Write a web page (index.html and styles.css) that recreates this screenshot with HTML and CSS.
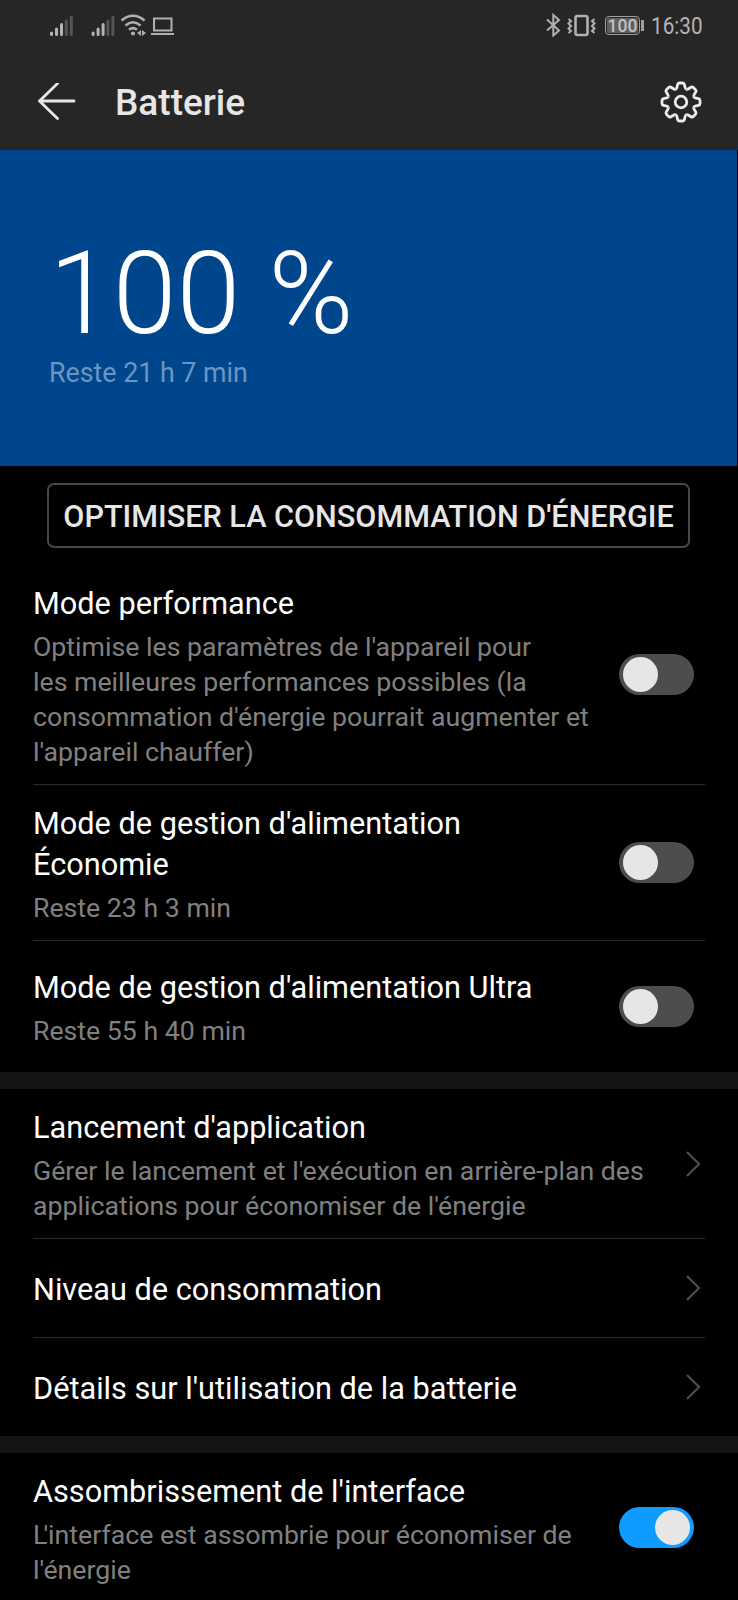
FILE: index.html
```html
<!DOCTYPE html>
<html lang="fr">
<head>
  <meta charset="UTF-8">
  <title>Batterie</title>
  <link rel="stylesheet" href="styles.css">
</head>
<body>
  <header>
    <div class="status-bar">
      <svg class="status-left" width="126" height="24" viewBox="0 0 126 24">
        <!-- signal bars -->
        <g id="signal">
          <path class="bar" d="M3.5 21.500V20M8.500 21.500V16M13.500 21.500V11.500"/>
          <path class="bar off" d="M18.300 21.500V8M23.300 21.500V4"/>
        </g>
        <use href="#signal" x="41.600"/>
        <!-- wifi -->
        <path class="line" d="M73.500 7.500Q85 -2 96.500 7.500M77.500 12.500Q85 6 92.500 12.500M81 16.800Q85 13.500 89 16.800"/>
        <circle class="fill" cx="85" cy="20.500" r="2.100"/>
        <path class="fill" d="M93 17v6l-4-3zM94 17v6l4-3z"/>
        <!-- laptop -->
        <path class="line thin" d="M106 5.500H123.500V17.500H106zM103 21H126"/>
      </svg>
      <div class="status-right">
        <svg width="50" height="24" viewBox="0 0 50 24">
          <!-- bluetooth -->
          <path class="line thin" d="M1 6.500L13 17.500L7.300 22.500V2L13 7L1 17.500"/>
          <!-- vibrate -->
          <rect class="line" x="29.500" y="3" width="12" height="19" rx="2"/>
          <path class="line thin" d="M22.500 6l2.500 2-2.500 2.500 2.500 2.500-2.500 2.500 2.500 2.500-2.500 2M48.500 6l-2.500 2 2.500 2.500-2.500 2.500 2.500 2.500-2.500 2.500 2.500 2"/>
        </svg>
        <div class="battery"><span>100</span></div>
        <span class="clock">16:30</span>
      </div>
    </div>

    <div class="title-bar">
      <svg width="38" height="38" viewBox="0 0 38 38">
        <path class="arrow" d="M36 18H1.500M19.500 .5L1.500 18L19.500 35.500"/>
      </svg>
      <h1>Batterie</h1>
      <svg width="42" height="42" viewBox="-21 -21 42 42">
        <g class="gear">
          <path id="tooth" d="M-5.280 -12.750Q-4.300 -13.160 -3.900 -15.200L-3.400 -17.500Q-3.100 -19 -1.600 -19H1.600Q3.100 -19 3.400 -17.500L3.900 -15.200Q4.300 -13.160 5.280 -12.750"/>
          <use href="#tooth" transform="rotate(45)"/>
          <use href="#tooth" transform="rotate(90)"/>
          <use href="#tooth" transform="rotate(135)"/>
          <use href="#tooth" transform="rotate(180)"/>
          <use href="#tooth" transform="rotate(225)"/>
          <use href="#tooth" transform="rotate(270)"/>
          <use href="#tooth" transform="rotate(315)"/>
          <circle r="5.800"/>
        </g>
      </svg>
    </div>
  </header>

  <section class="level">
    <div class="percent">100 %</div>
    <div class="remaining">Reste 21 h 7 min</div>
  </section>

  <button class="optimize-btn">OPTIMISER LA CONSOMMATION D'ÉNERGIE</button>

  <section class="group">
    <div class="row">
      <div class="text">
        <h2>Mode performance</h2>
        <p>Optimise les paramètres de l'appareil pour<br>les meilleures performances possibles (la<br>consommation d'énergie pourrait augmenter et<br>l'appareil chauffer)</p>
      </div>
      <div class="switch"></div>
    </div>
    <div class="row">
      <div class="text">
        <h2>Mode de gestion d'alimentation<br>Économie</h2>
        <p>Reste 23 h 3 min</p>
      </div>
      <div class="switch"></div>
    </div>
    <div class="row tall">
      <div class="text">
        <h2>Mode de gestion d'alimentation Ultra</h2>
        <p>Reste 55 h 40 min</p>
      </div>
      <div class="switch"></div>
    </div>
  </section>

  <section class="group">
    <div class="row">
      <div class="text">
        <h2>Lancement d'application</h2>
        <p>Gérer le lancement et l'exécution en arrière-plan des<br>applications pour économiser de l'énergie</p>
      </div>
      <svg class="chevron" width="16" height="28" viewBox="0 0 16 28"><path d="M2 2L14 14L2 26"/></svg>
    </div>
    <div class="row single">
      <div class="text">
        <h2>Niveau de consommation</h2>
      </div>
      <svg class="chevron" width="16" height="28" viewBox="0 0 16 28"><path d="M2 2L14 14L2 26"/></svg>
    </div>
    <div class="row single">
      <div class="text">
        <h2>Détails sur l'utilisation de la batterie</h2>
      </div>
      <svg class="chevron" width="16" height="28" viewBox="0 0 16 28"><path d="M2 2L14 14L2 26"/></svg>
    </div>
  </section>

  <section class="group">
    <div class="row">
      <div class="text">
        <h2>Assombrissement de l'interface</h2>
        <p><span class="kern">L</span>'interface est assombrie pour économiser de<br>l'énergie</p>
      </div>
      <div class="switch on"></div>
    </div>
  </section>
</body>
</html>
```
FILE: styles.css
```css
* {
  box-sizing: border-box;
}
body {
  margin: 0;
  height: 1600px;
  overflow: hidden;
  background: #000;
  color: #fff;
  font-family: Roboto, sans-serif;
}
h1, h2, p {
  margin: 0;
  font-weight: 400;
}
svg {
  display: block;
  fill: none;
}
header {
  height: 150px;
  background: #262626;
}

/* status bar */
.status-bar {
  display: flex;
  justify-content: space-between;
  height: 52px;
  padding: 13px 36px 0 48px;
}
.status-right {
  display: flex;
}
.bar {
  stroke: #b4b4b4;
  stroke-width: 3;
  stroke-linecap: round;
}
.bar.off {
  stroke: #555;
}
.line {
  stroke: #b0b0b0;
  stroke-width: 2.6;
}
.line.thin {
  stroke-width: 2;
}
.fill {
  fill: #b0b0b0;
}
.battery {
  position: relative;
  width: 35px;
  height: 19px;
  margin: 3px 11px 0 9px;
  padding: 1px;
  border: 1px solid #a0a0a0;
  border-radius: 4px;
}
.battery span {
  display: block;
  height: 15px;
  border-radius: 2px;
  background: #606060;
  color: #c0c0c0;
  font-size: 17.5px;
  font-weight: 500;
  line-height: 16px;
  text-align: center;
}
.battery::after {
  content: "";
  position: absolute;
  top: 3px;
  right: -5px;
  width: 3px;
  height: 11px;
  background: #a0a0a0;
}
.clock {
  width: 51px;
  color: #b4b4b4;
  font-size: 23px;
  line-height: 27px;
  transform: scaleX(0.9);
  transform-origin: left;
}

/* title bar */
.title-bar {
  display: flex;
  align-items: center;
  height: 98px;
  padding: 2px 36px 0 38px;
}
.title-bar h1 {
  flex: 1;
  margin-left: 39px;
  padding-top: 1px;
  color: #e6e6e6;
  font-size: 37px;
  font-weight: 500;
}
.arrow {
  stroke: #e6e6e6;
  stroke-width: 2.8;
  stroke-linecap: round;
  stroke-linejoin: round;
}
.gear {
  stroke: #ececec;
  stroke-width: 2.8;
}

.level {
  height: 316px;
  margin-right: 1px;
  padding: 84px 49px 0;
  background: #00468c;
}
.percent {
  font-size: 115px;
  font-weight: 300;
  line-height: 120px;
}
.remaining {
  margin-top: 4px;
  color: #6b95c3;
  font-size: 26.8px;
  line-height: 30px;
}
.optimize-btn {
  display: block;
  width: 643px;
  height: 65px;
  margin: 17px 0 17px 47px;
  padding: 2px 0 0;
  border: 2px solid #484848;
  border-radius: 7px;
  background: #000;
  color: #e6e6e6;
  font-family: inherit;
  font-size: 30.6px;
  font-weight: 500;
  white-space: nowrap;
}

/* settings list */
.group + .group {
  border-top: 17px solid #141414;
}
.row {
  display: flex;
  justify-content: space-between;
  align-items: center;
  margin: 0 33px;
  white-space: nowrap;
}
.row + .row {
  border-top: 1px solid #2c2c2c;
}
.text {
  padding: 18px 0 14px;
}
.tall .text {
  padding: 26px 0 23px;
}
.single .text {
  padding: 30px 0 27px;
}
h2 {
  font-size: 30.7px;
  line-height: 41px;
}
p {
  margin-top: 6px;
  color: #808080;
  font-size: 26.7px;
  line-height: 35px;
}
.kern {
  letter-spacing: -4px;
}
.switch {
  width: 75px;
  height: 41px;
  margin-right: 11.5px;
  padding: 3px 4px;
  border-radius: 21px;
  background: #4d4d4d;
}
.switch::before {
  content: "";
  display: block;
  width: 35px;
  height: 35px;
  border-radius: 50%;
  background: #e6e6e6;
}
.switch.on {
  background: #0f9bff;
}
.switch.on::before {
  margin-left: auto;
}
.chevron {
  margin-right: 4.5px;
  stroke: #4a4a4a;
  stroke-width: 2.4;
}
```
